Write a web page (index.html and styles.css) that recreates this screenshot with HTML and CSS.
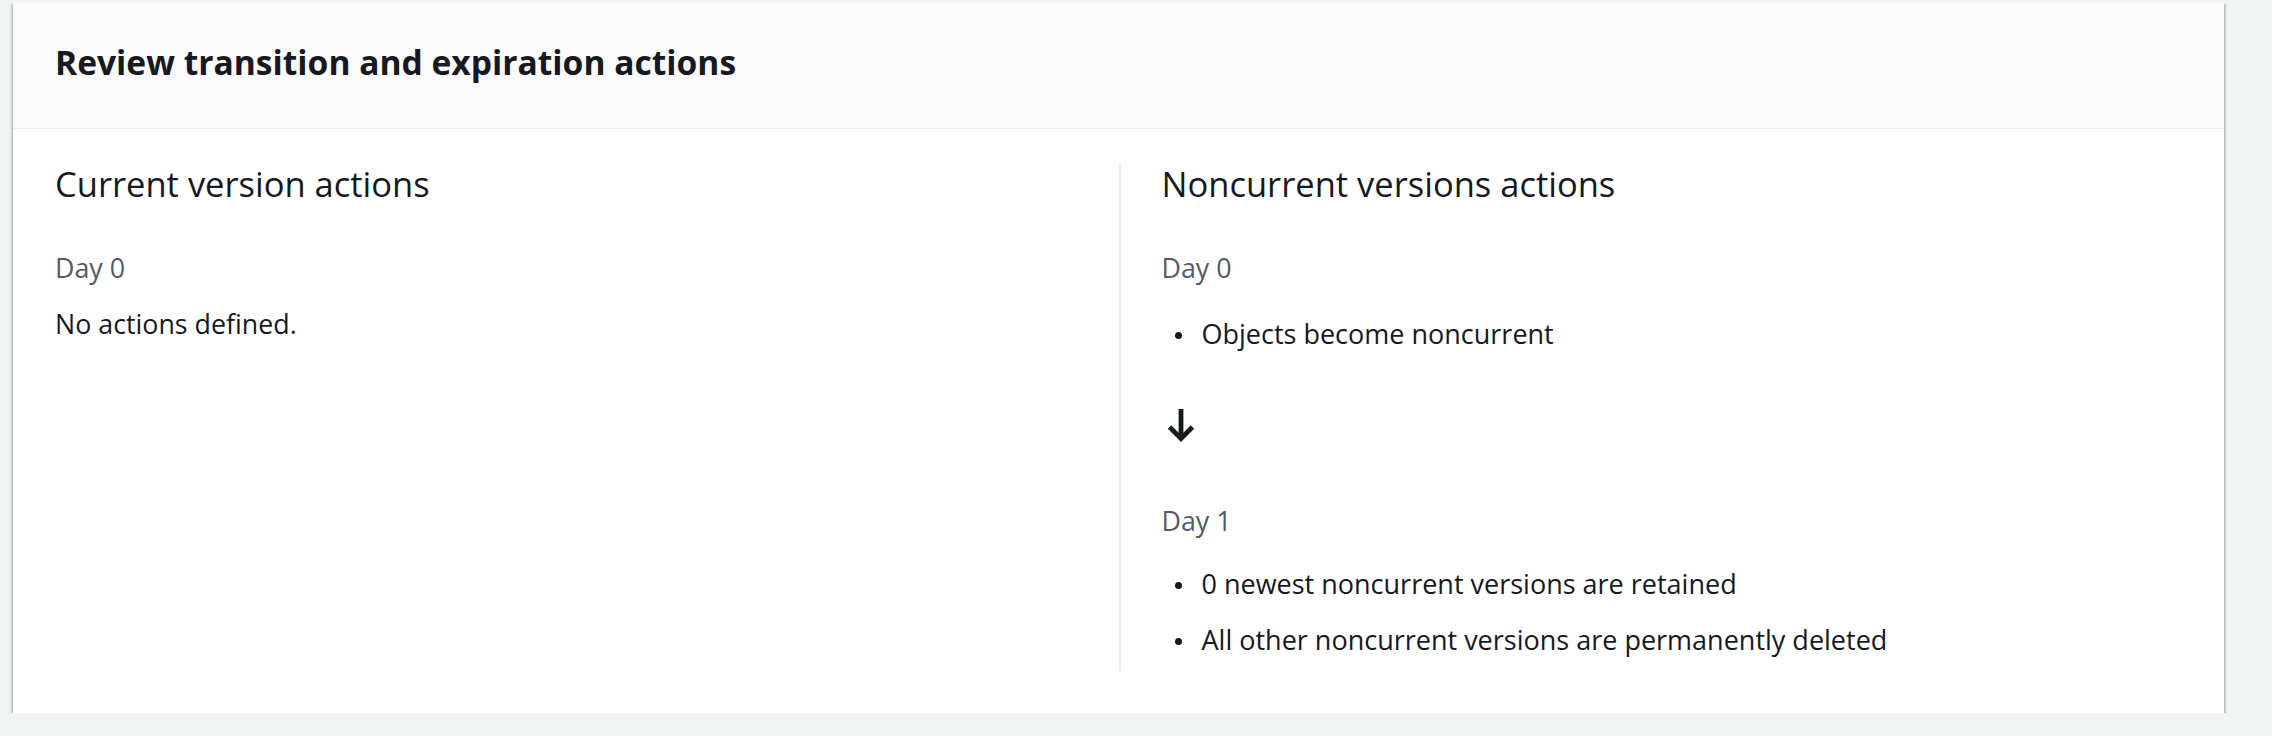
FILE: index.html
```html
<!DOCTYPE html>
<html lang="en">
<head>
<meta charset="utf-8">
<title>Review transition and expiration actions</title>
<link rel="stylesheet" href="styles.css">
</head>
<body>
<section class="card">
  <header class="card-header">
    <h2 class="card-title">Review transition and expiration actions</h2>
  </header>
  <div class="card-body">
    <div class="col">
      <h3 class="col-title">Current version actions</h3>
      <div class="day">Day 0</div>
      <p class="none">No actions defined.</p>
    </div>
    <div class="col col-right">
      <h3 class="col-title">Noncurrent versions actions</h3>
      <div class="day">Day 0</div>
      <ul class="actions">
        <li>Objects become noncurrent</li>
      </ul>
      <div class="arrow">
        <svg width="28" height="34" viewBox="0 0 28 34" aria-hidden="true">
          <line x1="14" y1="0" x2="14" y2="30" stroke="#16191f" stroke-width="4.8"/>
          <polyline points="2.5,18 14,29.5 25.5,18" fill="none" stroke="#16191f" stroke-width="4.8" stroke-linejoin="miter"/>
        </svg>
      </div>
      <div class="day day-after">Day 1</div>
      <ul class="actions actions-multi">
        <li>0 newest noncurrent versions are retained</li>
        <li>All other noncurrent versions are permanently deleted</li>
      </ul>
    </div>
  </div>
</section>
</body>
</html>
```

FILE: styles.css
```css
html, body {
  margin: 0;
  padding: 0;
  background: #f2f3f3;
}

body {
  padding: 2px 48px 0 13px;
  font-family: "Open Sans", "Noto Sans", Arial, sans-serif;
  color: #16191f;
}

.card {
  background: #ffffff;
  box-shadow: 0 2px 2px 0 rgba(0, 28, 36, 0.35),
              2px 2px 2px 0 rgba(0, 28, 36, 0.15),
              -2px 2px 2px 0 rgba(0, 28, 36, 0.15);
}

.card-header {
  background: #fafafa;
  border-bottom: 1px solid #eaeded;
  padding: 40px 42px 46px;
}

.card-title {
  margin: 0;
  font-size: 33.6px;
  line-height: 40px;
  font-weight: 700;
  color: #16191f;
}

.card-body {
  display: grid;
  grid-template-columns: 1fr 1fr;
  padding: 33px 42px 42px;
}

.col {
  display: flex;
  flex-direction: column;
  align-items: flex-start;
}

.col-right {
  border-left: 2px solid #eaeded;
  padding-left: 41px;
  padding-bottom: 11px;
}

.col-title {
  margin: 0;
  font-size: 34.5px;
  line-height: 44px;
  font-weight: 400;
  color: #16191f;
}

.day {
  margin-top: 42px;
  font-size: 26.8px;
  line-height: 40px;
  color: #545b64;
}

.day-after {
  margin-top: 58px;
}

.none {
  margin: 16px 0 0;
  font-size: 26.8px;
  line-height: 40px;
}

.actions {
  list-style: none;
  margin: 26px 0 0;
  padding: 0;
  display: flex;
  flex-direction: column;
  gap: 13px;
}

.actions-multi {
  margin-top: 23px;
  gap: 16px;
}

.actions li {
  display: flex;
  align-items: center;
  font-size: 27px;
  line-height: 40px;
}

.actions li::before {
  content: "";
  width: 7px;
  height: 7px;
  border-radius: 50%;
  background: #16191f;
  margin: 2px 20px 0 13px;
  flex: none;
}

.arrow {
  margin-top: 55px;
  height: 34px;
  padding-left: 5px;
}

.arrow svg {
  display: block;
}
```
